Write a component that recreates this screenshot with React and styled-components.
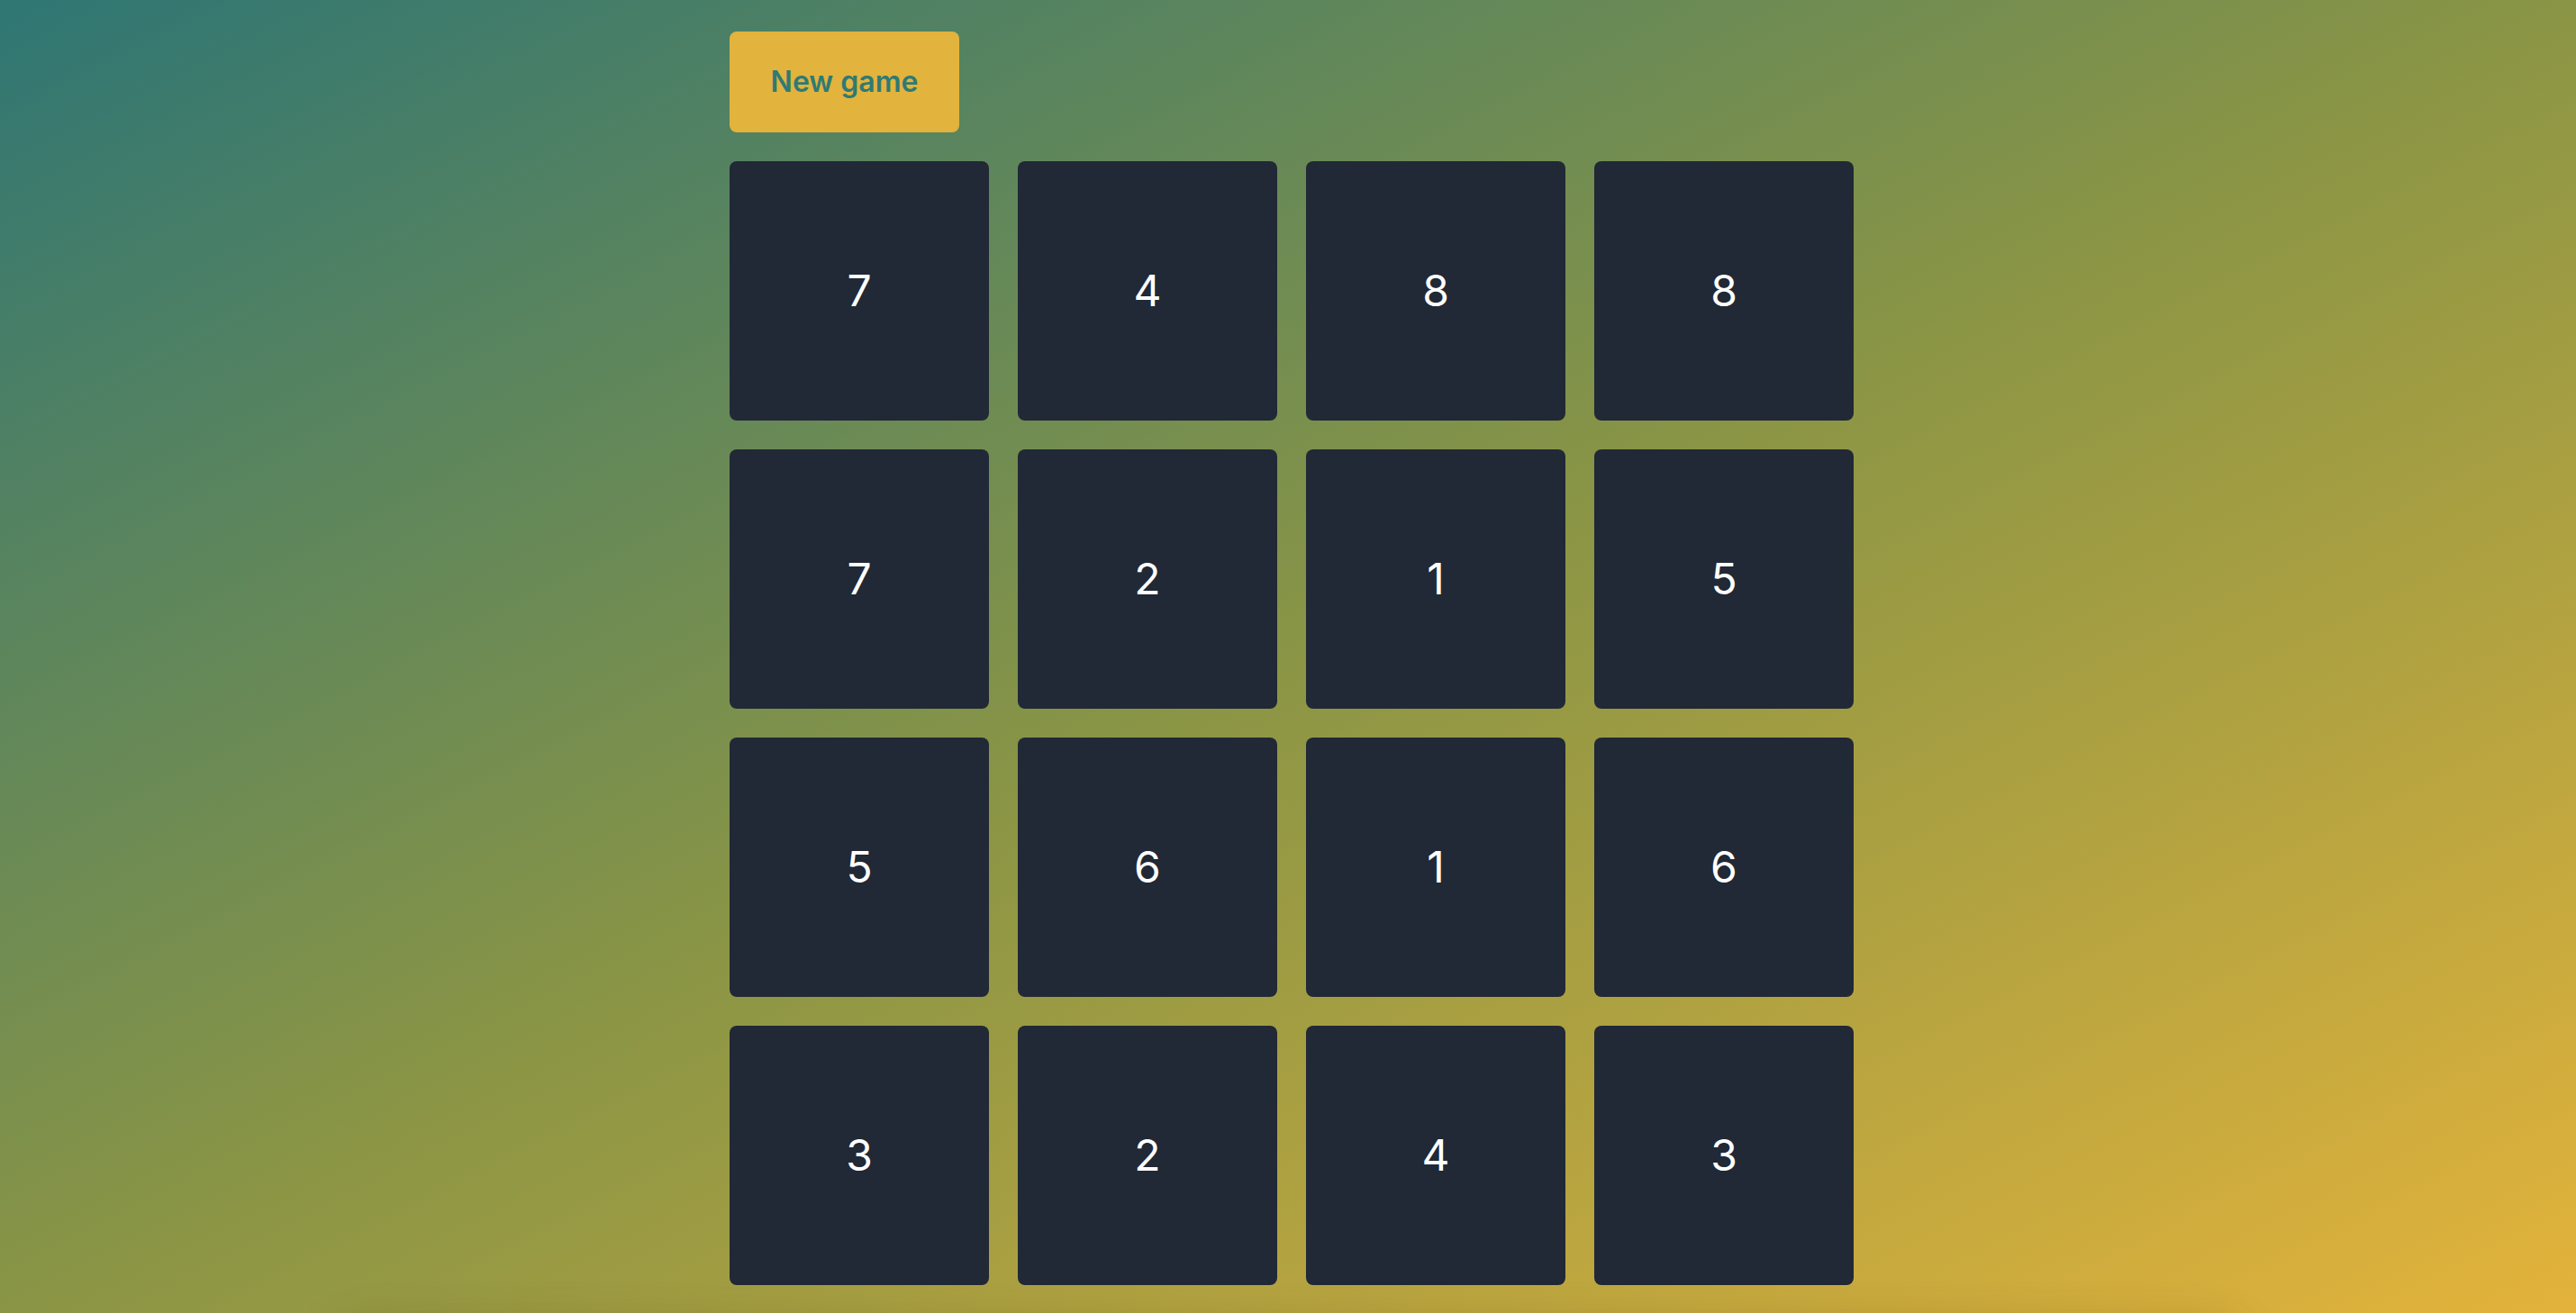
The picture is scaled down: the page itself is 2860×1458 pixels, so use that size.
import React from "react";
import styled, { createGlobalStyle } from "styled-components";

const GlobalStyle = createGlobalStyle`
  * { box-sizing: border-box; }
  html, body { margin: 0; padding: 0; }
  body { font-family: Inter, "Noto Sans", "Liberation Sans", sans-serif; }
`;

const Page = styled.div`
  height: 100vh;
  overflow: hidden;
  background: linear-gradient(to bottom right, #2f7674 0%, #8a9545 50%, #e3b33b 100%);
  display: flex;
  flex-direction: column;
  align-items: flex-start;
  padding: 35px 0 0 810px;
`;

const NewGameButton = styled.button`
  font-family: Inter, "Noto Sans", "Liberation Sans", sans-serif;
  font-size: 32px;
  line-height: 48px;
  font-weight: 600;
  color: #2f7a74;
  background: #e2b33d;
  border: none;
  border-radius: 8px;
  padding: 32px 0;
  width: 255px;
  white-space: nowrap;
  text-align: center;
  cursor: pointer;
`;

const Board = styled.div`
  margin-top: 32px;
  display: grid;
  grid-template-columns: repeat(4, 288px);
  grid-auto-rows: 288px;
  gap: 32px;
`;

const Tile = styled.div`
  background: #212836;
  border-radius: 8px;
  display: flex;
  align-items: center;
  justify-content: center;
  color: #ffffff;
  font-size: 48px;
  font-weight: 400;
  line-height: 1;
`;

const BelowFold = styled.div`
  margin-top: 56px;
  margin-left: -440px;
  width: 2120px;
  height: 200px;
  flex-shrink: 0;
  border-radius: 40px;
  box-shadow: 0 -4px 50px 4px rgba(70, 60, 10, 0.3);
`;

const values = [7, 4, 8, 8, 7, 2, 1, 5, 5, 6, 1, 6, 3, 2, 4, 3];

export default function App() {
  return (
    <>
      <GlobalStyle />
      <Page>
        <NewGameButton>New game</NewGameButton>
        <Board>
          {values.map((v, i) => (
            <Tile key={i}>{v}</Tile>
          ))}
        </Board>
        <BelowFold />
      </Page>
    </>
  );
}
